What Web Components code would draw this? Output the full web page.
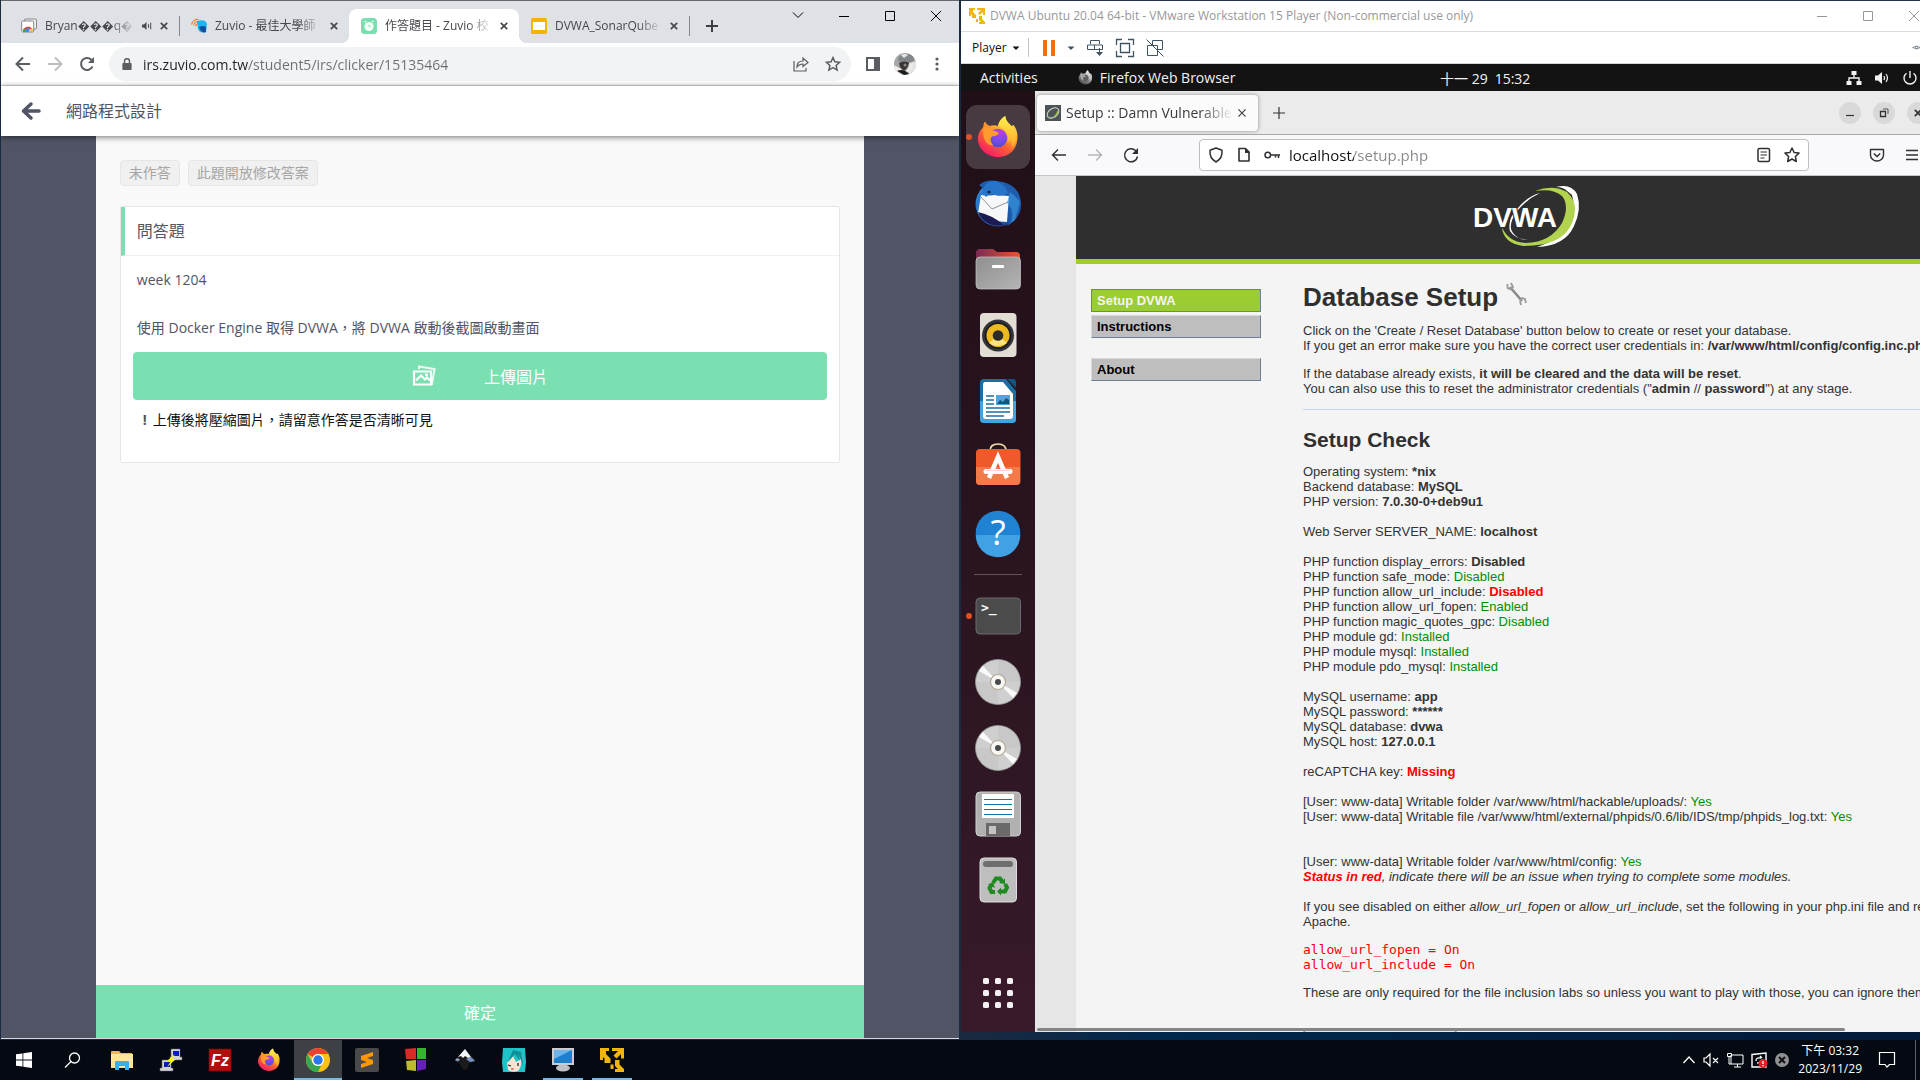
<!DOCTYPE html>
<html lang="zh-Hant">
<head>
<meta charset="utf-8">
<title>Desktop</title>
<style>
html,body{margin:0;height:100%;overflow:hidden;background:#06101c}
body{font-family:"Open Sans","Noto Sans CJK TC",sans-serif;font-size:12px}
</style>
</head>
<body>
<desk-top></desk-top>
<script>
const define=(name,css,html,after)=>{
  const tpl=document.createElement('template');
  tpl.innerHTML='<style>*{box-sizing:border-box}button{font:inherit;color:inherit;background:none;border:0;padding:0;margin:0;cursor:pointer}input{font:inherit;border:0;margin:0;padding:0;background:none;outline:0;min-width:0}'+css+'</style>'+html;
  customElements.define(name,class extends HTMLElement{
    constructor(){super();this.attachShadow({mode:'open'}).append(tpl.content.cloneNode(true));}
    connectedCallback(){if(after)after(this,this.shadowRoot);}
  });
};

const S='fill="none" stroke="currentColor"';
const firefox=`<defs><linearGradient id="a" x1=".85" y1="0" x2=".25" y2="1"><stop offset="0" stop-color="#fff44f"/><stop offset=".35" stop-color="#ffb02e"/><stop offset=".65" stop-color="#ff5a36"/><stop offset="1" stop-color="#f5156c"/></linearGradient><radialGradient id="b" cx=".6" cy=".2" r=".9"><stop offset="0" stop-color="#c139e6"/><stop offset=".5" stop-color="#7a4be8"/><stop offset="1" stop-color="#4a4bc4"/></radialGradient><linearGradient id="c" x1="0" y1="0" x2="0" y2="1"><stop offset="0" stop-color="#fff04c"/><stop offset="1" stop-color="#ffa52a"/></linearGradient></defs><path fill="url(#a)" d="M8 13c0-3 1-5 2-6 1 3 3 4 5 5 3-1 6-1 9 0 1-5 4-9 8-11 0 5 4 8 7 11l2-1c3 4 5 9 4 16-1 12-10 19-21 19S3 38 2 27c0-6 2-10 6-14Z"/><circle cx="24" cy="25" r="10" fill="url(#b)"/><path fill="#ff9a2c" d="M8 13c5-1 8 1 10 4 3 0 5 1 7 3-2 3-6 3-8 4-2 2-1 6 2 9-8 1-13-9-11-20Z"/><path fill="url(#c)" d="M32 1c0 5 4 8 8 13 5 7 5 15-1 22 1-4-1-6-1-9-2 2-3 4-4 4 3-8-1-16-10-19 1-5 4-9 8-11Z"/>`;
const vm=`<path fill="#f2b50c" d="M0 0h6v2H4v2l3 3-2 2-3-3v2H0ZM8 0h8v7h-2V4l-3 3-2-2 3-3H8ZM10 8h3v3l3 3v2h-6v-2h2l-2-2ZM3 7h4v3H3ZM7 11h2v3H7Z"/>`;
const disc=`<circle cx="24" cy="24" r="22.5" fill="#cfcfcf" stroke="#989898" stroke-width=".8"/><path fill="#bfbfbf" d="M24 24 24 2A22 22 0 0 1 46 24ZM24 24V46A22 22 0 0 1 2 24Z" opacity=".45"/><path fill="#fafafa" d="M24 24 5 13 9 8ZM24 24 43 35 39 40Z"/><circle cx="24" cy="24" r="7.5" fill="#f7f7f5" stroke="#b4a894" stroke-width="1.2"/><circle cx="24" cy="24" r="3" fill="#4a4a4a"/>`;
const ICONS={
 'cws':[16,`<rect x="3.500" y="1" width="12" height="10" rx="1" fill="#eee" stroke="#888"/><rect x=".7" y="3" width="12" height="11" rx="1" fill="#fff" stroke="#888"/><path fill="#ea4335" d="M2 13a5 5 0 0 1 9.500-1.500L7 11Z"/><path fill="#34a853" d="M2 14a5 5 0 0 1 1-4l3 4Z"/><path fill="#fbbc05" d="M11.500 10.500q.8 2 0 3.500H8Z"/><circle cx="6.700" cy="12" r="2" fill="#4285f4"/>`],
 'zuvio':[16,`<path d="M.5 6.500a6.500 6.500 0 0 1 7-5M2.800 7.500a4.500 4.500 0 0 1 4.700-4M5 8.500a2.500 2.500 0 0 1 2.500-3" fill="none" stroke="#f47b20" stroke-width="1.200"/><path fill="#1db4f0" d="M6 3q7-2 9 1l1 2-1 8q-6 2-8-3Z"/><path fill="#1450a0" d="M8 9q4-2 7 0v5q-5 2-7-5Z"/>`],
 'clicker':[16,`<rect width="16" height="16" rx="3.500" fill="#79dfb0"/><circle cx="8" cy="8.500" r="4.600" fill="#f7fffb"/><path d="M5 4 3.500 3M11 4l1.500-1" stroke="#f7fffb" stroke-width="1.200"/><path d="M8 6.500v2h1.500" stroke="#79dfb0" stroke-width=".9" fill="none"/>`],
 'slides':[16,`<rect width="16" height="16" rx="1.500" fill="#f4b400"/><rect x="2" y="4" width="12" height="8" fill="#fff"/>`],
 'sound':[10,`<path fill="currentColor" d="M0 3.500h2L4.500 1v8L2 6.500H0ZM6 3l1 .6v3L6 7ZM8.200 1.500l1 .5v6l-1 .5Z"/>`],
 'x':[8,`<path ${S} stroke-width="1.700" d="m.8.8 6.400 6.400M7.200.8.8 7.200"/>`],
 'xthin':[8,`<path ${S} stroke-width="1.100" d="m.4.4 7.200 7.200M7.600.4.4 7.600"/>`],
 'plus':[12,`<path ${S} stroke-width="2" d="M6 0v12M0 6h12"/>`],
 'plusthin':[12,`<path ${S} stroke-width="1.200" d="M6 0v12M0 6h12"/>`],
 'down':[10,`<path ${S} d="m0 2.500 5 5 5-5"/>`],
 'min':[10,`<path ${S} d="M0 5.500h10"/>`],
 'max':[10,`<path ${S} d="M.5.5h9v9h-9z"/>`],
 'close':[10,`<path ${S} d="m0 0 10 10M10 0 0 10"/>`],
 'back':[16,`<path ${S} stroke-width="2" d="M15 8H2M8 1.500 1.500 8 8 14.500"/>`],
 'fwd':[16,`<path ${S} stroke-width="2" d="M1 8h13M8 1.500 14.500 8 8 14.500"/>`],
 'reload':[16,`<path ${S} stroke-width="2" d="M13.500 10.500A6 6 0 1 1 12.300 3.700L14 5.400"/><path fill="currentColor" d="M15 1v6H9Z"/>`],
 'lock':[12,`<path fill="currentColor" d="M2 5h8q.6 0 .6.700v5.600q0 .7-.6.700H2q-.6 0-.6-.7V5.700Q1.400 5 2 5Z"/><path ${S} stroke-width="1.400" d="M3.500 5V3.200a2.500 2.500 0 0 1 5 0V5"/>`],
 'share':[16,`<path ${S} stroke-width="1.200" d="M1 5v10h12v-3M4 11q0-6 6-6V2l5 4.500-5 4V8Q6 8 4 11Z"/>`],
 'star':[16,`<path ${S} stroke-width="1.500" d="m8 1.500 1.900 4.300 4.700.5-3.500 3.200 1 4.600L8 11.700l-4.100 2.400 1-4.600L1.400 6.300l4.700-.5Z"/>`],
 'panel':[16,`<path fill="currentColor" d="M1 1h14v14H1ZM3 3v10h6V3Z" fill-rule="evenodd"/>`],
 'avatar':[22,`<defs><clipPath id="k"><circle cx="11" cy="11" r="11"/></clipPath></defs><g clip-path="url(#k)"><path fill="#a5a8a6" d="M0 0h22v22H0z"/><ellipse cx="12" cy="6" rx="8" ry="5" fill="#83868a"/><path fill="#e5e5e5" d="M7 2q4-2 7 0l-4 3ZM15 10l7-2v8l-7 6Z"/><path fill="#3a3434" d="M5 10q6-3 10 0l-2 5-3 3-4-4Z"/><path fill="#f2ecea" d="m0 12 7 4 3 5H3ZM12 18l5-7 1 2-4 7Z"/><path fill="#1d1a1a" d="M3 18q6-3 12 3l-5 1Z"/><circle cx="11" cy="12" r="1.500" fill="#888"/></g>`],
 'dots':[16,`<g fill="currentColor"><circle cx="8" cy="3" r="1.600"/><circle cx="8" cy="8" r="1.600"/><circle cx="8" cy="13" r="1.600"/></g>`],
 'bigback':[20,`<path ${S} stroke-width="3.500" stroke-linecap="round" stroke-linejoin="round" d="M18 10H3M10 3l-7.500 7 7.500 7"/>`],
 'photos':[24,`<path ${S} stroke-width="2" opacity=".85" d="M7 5V2.500L22.500 5 20 20h-1"/><path ${S} stroke-width="2.200" d="M2 7.500h17v13H2Z"/><path ${S} stroke-width="2" d="m4 16.500 5-5 4 4 2-2 3 3"/><circle cx="14.500" cy="10.800" r="1.500" fill="currentColor"/>`],
 'vm':[16,vm],
 'pause':[16,`<path fill="#ff6a13" d="M2 0h4v16H2ZM10 0h4v16h-4Z"/>`],
 'caret':[8,`<path fill="currentColor" d="M.5 2.500h7L4 6Z"/>`],
 'cad':[18,`<path ${S} d="M4.500 5V1.500h9V5M1.500 6h7v4.500h-7ZM8.500 6h8v4.500h-8ZM13.500 9v6"/><path fill="currentColor" d="M10 13h7l-3.500 4Z"/>`],
 'full':[18,`<path ${S} stroke-width="1.300" d="M.5 6V.5H6M12 .5h5.500V6M17.500 12v5.500H12M6 17.500H.5V12M4.500 4.500h9v9h-9Z"/>`],
 'unity':[18,`<path ${S} d="M6.500 6V1.500h10v9H12M1.500 6.500h10v10h-10ZM.500.500l17 17"/>`],
 'eye':[16,`<path ${S} d="M1 8q7-5 14 0-7 5-14 0Z"/><circle cx="8" cy="8" r="2" ${S}/>`],
 'firefox':[48,firefox],
 'net':[16,`<path fill="currentColor" d="M5.500 1h5v4h-5ZM.5 11h5v4h-5ZM10.500 11h5v4h-5Z"/><path ${S} stroke-width="1.400" d="M8 4v4M3 12V8h10v4"/>`],
 'vol':[16,`<path fill="currentColor" d="M1 5.500h3L8 2v12L4 10.500H1Z"/><path ${S} stroke-width="1.200" d="M9.800 6q1.600 2 0 4M12 4q3 4 0 8"/>`],
 'power':[16,`<path ${S} stroke-width="1.400" d="M4.500 3.200a6 6 0 1 0 7 0M8 1v7"/>`],
 'fback':[16,`<path ${S} stroke-width="1.400" d="M15 8H1.500M7 2.500 1.500 8 7 13.500"/>`],
 'ffwd':[16,`<path ${S} stroke-width="1.400" d="M1 8h13.500M9 2.500 14.500 8 9 13.500"/>`],
 'freload':[16,`<path ${S} stroke-width="1.500" d="M14.500 9.500A6.500 6.500 0 1 1 12.500 3.500L14 5"/><path fill="currentColor" d="M15 1v6H9Z"/>`],
 'shield':[16,`<path ${S} stroke-width="1.500" stroke-linejoin="round" d="m8 1 6 2.300c.5 5-1 9-6 11.700C3 12.300 1.500 8.300 2 3.300Z"/>`],
 'doc':[16,`<path ${S} stroke-width="1.600" stroke-linejoin="round" d="M3 1.500h6.500L13 5v9H3Z"/><path fill="currentColor" d="M9 1v5h5Z"/>`],
 'key':[16,`<circle cx="3.800" cy="8" r="2.800" ${S} stroke-width="1.500"/><path ${S} stroke-width="1.500" d="M6.500 8H16M14.500 8v3M11.500 8v2.500"/>`],
 'reader':[16,`<rect x="2" y="1.500" width="11.500" height="13" rx="1.500" ${S} stroke-width="1.500"/><path ${S} stroke-width="1.200" d="M4.500 5H11M4.500 8H11M4.500 11H8.500"/>`],
 'fstar':[16,`<path ${S} stroke-width="1.500" stroke-linejoin="round" d="m8 1 2.100 4.500 4.900.6-3.600 3.400.9 5L8 12l-4.300 2.500.9-5L1 6.100l4.900-.6Z"/>`],
 'pocket':[16,`<path ${S} stroke-width="1.400" stroke-linejoin="round" d="M1.500 2.500h13V8a6.500 6 0 0 1-13 0Z"/><path ${S} stroke-width="1.500" d="m4.800 6.500 3.200 3 3.200-3"/>`],
 'menu':[14,`<path ${S} stroke-width="1.300" d="M1 2.500h12M1 7h12M1 11.500h12"/>`],
 'wmin':[10,`<path ${S} stroke-width="1.200" d="M1 7.500h8"/>`],
 'wres':[10,`<path ${S} stroke-width="1.300" d="M1.500 3.500h5v5h-5Z"/><path ${S} stroke-width=".8" d="M4 1h5v5"/>`],
 'dvwafav':[16,`<path fill="#4d5358" d="M0 0h16v16H0z"/><ellipse cx="8" cy="8" rx="6.500" ry="4.300" transform="rotate(-35 8 8)" fill="none" stroke="#d7dccf" stroke-width="1"/><path d="M3 12q7 3 10-6" fill="none" stroke="#9bc83a" stroke-width="1.200"/>`],
 'thunderbird':[48,`<defs><linearGradient id="t" x1="0" y1="0" x2="1" y2="1"><stop offset="0" stop-color="#2f8fe0"/><stop offset="1" stop-color="#173f94"/></linearGradient></defs><circle cx="24" cy="25" r="22.500" fill="url(#t)"/><path fill="#1e5cae" d="M5 6Q14-1 26 3 47 6 47 26q0 13-14 21 5-9 2-17Z"/><path fill="#f6f7f8" d="M7 16q6 1 13 0l15 1-2 26q-14 0-29-9Z"/><path d="m7 18 11 12 16-7" fill="none" stroke="#888" stroke-width=".9"/><path fill="#2775ca" d="M10 8q3-7 12-6 9 3 12 12-7 4-13 2-5-3-9 2Q8 14 10 8Z"/><path fill="#3c9be0" d="M36 13q6 4 10 10l-5 18-4 3q4-13-4-20Z" opacity=".6"/><path fill="#1b1b52" d="M4 33q14 3 26 13Q11 49 4 33Z"/><circle cx="15" cy="13" r="1.600" fill="#10264f"/>`],
 'files':[48,`<defs><linearGradient id="f" x1="0" x2="1"><stop offset="0" stop-color="#7b2a55"/><stop offset="1" stop-color="#e9552a"/></linearGradient><linearGradient id="g" x1="0" y1="0" x2="1" y2="1"><stop offset="0" stop-color="#8f8f8f"/><stop offset="1" stop-color="#b4b4b4"/></linearGradient></defs><path fill="url(#f)" d="M2 8q0-4 4-4h13l4 3h19q4 0 4 4v9H2Z"/><rect x="2" y="12" width="44.500" height="32" rx="4" fill="url(#g)" stroke="#c8c8c8" stroke-width=".7"/><rect x="18" y="20" width="12" height="3" rx="1" fill="#fff"/>`],
 'rhythm':[48,`<rect x="6" y="2" width="36.500" height="44" rx="4" fill="#e3ded3"/><circle cx="24" cy="24.500" r="16" fill="#34343c"/><circle cx="24" cy="24.500" r="13.500" fill="#1d1d22"/><circle cx="24" cy="24.500" r="11.500" fill="#eeb91e"/><path fill="#ffe37d" d="M15 32q8 6 18 0l-9-8Z"/><circle cx="24" cy="24.500" r="5.300" fill="#2b2b2b"/>`],
 'writer':[48,`<path fill="#1a6fa3" d="M10 2h22l10 12v28q0 4-4 4H10q-4 0-4-4V6q0-4 4-4Z"/><path fill="#41a4dc" d="M6 24h36v18q0 4-4 4H10q-4 0-4-4Z"/><path fill="#0f5580" d="M33 2h6q3 0 3 3v6Z"/><path fill="#fff" d="M11 5h18l10 12v22q0 3-3 3H12q-3 0-3-3V8q0-3 2-3Z"/><path stroke="#1a6fa3" stroke-width="1.700" d="M12 19h8M12 23h8M12 27h8M12 31h24M12 35h24M12 39h18"/><path fill="#4aa8dc" d="M22 18h14v10H22Z"/><path fill="#14547f" d="m23 27 3-4 3 2 3-4 3 2v4Z"/>`],
 'software':[48,`<path d="M16 8q0-7 8-7t8 7" fill="none" stroke="#f3d9a8" stroke-width="1.700"/><rect x="2" y="6" width="44.500" height="36" rx="4" fill="#f0592a"/><path fill="#f37b4a" d="M2 24h44v14q0 4-4 4H6q-4 0-4-4Z"/><path d="M15 35 24 14l9 21" fill="none" stroke="#fff" stroke-width="4.500"/><path d="M12 28.500h24" stroke="#fff" stroke-width="5" stroke-linecap="round"/><path d="M12 27.500h24" stroke="#f8cdbb" stroke-width=".8"/>`],
 'help':[48,`<circle cx="24" cy="24" r="22.300" fill="#1f82d2"/><path fill="#40a1e4" d="M1.700 26h44.600A22.300 22.300 0 0 1 1.700 26Z"/><text x="24" y="36" text-anchor="middle" font-family="Open Sans" font-size="35" fill="#fff">?</text>`],
 'terminal':[48,`<rect x="2" y="6" width="44.500" height="36" rx="4" fill="#4b4b4b" stroke="#6b6b6b"/><text x="7" y="20" font-family="DejaVu Sans Mono" font-weight="bold" font-size="13" fill="#fff">&gt;_</text>`],
 'disc':[48,disc],
 'floppy':[48,`<rect x="2" y="2" width="44.500" height="44" rx="4" fill="#b1b1b1" stroke="#d0d0d0"/><path fill="#fff" d="M8 4h32v24H8z"/><path stroke="#0d79a8" d="M10 9.500h28M10 14.500h28M10 19.500h28M10 24.500h28"/><path fill="#6a6a6a" d="M12 33h24v13H12z"/><path fill="#c4c4c4" d="M15 36h7v8h-7z"/>`],
 'trash':[48,`<rect x="6" y="2" width="36.500" height="44" rx="4" fill="#bebebe" stroke="#dcdcdc"/><rect x="9" y="5" width="30" height="6" rx="3" fill="#6e6e6e"/><g fill="none" stroke="#1f8a1f" stroke-width="4"><path d="m19 27 3-4.500h4l2.500 3.500M31 28l2 3.500-2 4h-4.500M21 36h-3.500l-2-4 2-3.500"/></g><path fill="#1f8a1f" d="m25 27 6 1 0-5.500ZM27 31.500v8l-4-4ZM14 28.500l5-2.500 2 6Z"/>`],
 'grid':[48,`<g fill="#f2f0f1"><rect x="9" y="9" width="6" height="6" rx="1.500"/><rect x="21" y="9" width="6" height="6" rx="1.500"/><rect x="33" y="9" width="6" height="6" rx="1.500"/><rect x="9" y="21" width="6" height="6" rx="1.500"/><rect x="21" y="21" width="6" height="6" rx="1.500"/><rect x="33" y="21" width="6" height="6" rx="1.500"/><rect x="9" y="33" width="6" height="6" rx="1.500"/><rect x="21" y="33" width="6" height="6" rx="1.500"/><rect x="33" y="33" width="6" height="6" rx="1.500"/></g>`],
 'wrench':[24,`<path d="m6 5 12 14" stroke="#8b8b8b" stroke-width="2.600"/><path d="M3.500 2v4l3 1.500L9 5l-2-4M16 19l2-3 3 1 1 4M16 19l1 4" fill="none" stroke="#9a9a9a" stroke-width="1.800"/>`],
 'start':[16,`<path fill="#fff" d="M0 2.300 6.500 1.400V7.600H0ZM7.300 1.300 16 0V7.600H7.300ZM0 8.400H6.500v6.200L0 13.700ZM7.300 8.400H16V16L7.300 14.700Z"/>`],
 'search':[16,`<circle cx="9.500" cy="6" r="5" fill="none" stroke="#fff" stroke-width="1.300"/><path stroke="#fff" stroke-width="1.300" d="m6 9.500-6 6"/>`],
 'explorer':[24,`<path fill="#e9b94a" d="M1 4q0-1 1-1h7l2 2h11v4H1Z"/><path fill="#ffe59a" d="M1 6h22v14H1Z"/><path fill="#3ab0e8" d="M5 14q0-1 1-1h12q1 0 1 1v8h-4v-4H9v4H5Z"/>`],
 'putty':[24,`<path fill="#d4d4d4" stroke="#666" stroke-width=".5" d="M12 1h9v8h2v3H11V9h1ZM3 12h9v8h2v3H1v-3h2Z"/><path fill="#0b18c8" d="M14 3h6v5h-6ZM5 14h6v5H5Z"/><path fill="#ff0" d="m16 6-8 7h4l-4 6 9-8h-4Z"/>`],
 'filezilla':[24,`<path fill="#b30d0d" d="M1 1h22v22H1z"/><path d="M1 1h22v22H1z" fill="none" stroke="#7e0505" stroke-dasharray="2 1"/><text x="12" y="18" text-anchor="middle" font-family="Liberation Sans" font-weight="bold" font-style="italic" font-size="16" fill="#fff">Fz</text>`],
 'chrome':[24,`<circle cx="12" cy="12" r="12" fill="#fbc116"/><path fill="#e94335" d="M1.600 6A12 12 0 0 1 22.400 6H12a6 6 0 0 0-5.200 3Z"/><path fill="#34a853" d="M1.600 6 6.800 15A6 6 0 0 0 12 18l1 0-3 5.800A12 12 0 0 1 1.600 6Z"/><path fill="#34a853" d="m12 24 3-6-3 0-2 1 0 4.800Z"/><circle cx="12" cy="12" r="6" fill="#fff"/><circle cx="12" cy="12" r="4.700" fill="#2a78ee"/>`],
 'sublime':[24,`<rect width="24" height="24" rx="2" fill="#4a4a4a"/><path fill="#ff9800" d="m6 8 12-4v4L12 10l6 2v4L6 20v-4l6-2-6-2Z"/>`],
 'blocks':[24,`<path fill="#d72b25" d="m1 1 11-1v11H2Z"/><path fill="#35b52b" d="M13 0h9v11h-9Z"/><path fill="#bdbb2a" d="m2 13 10-1v11l-9-1Z"/><path fill="#6420b8" d="M13 12h9v9l-9 2Z"/>`],
 'inkscape':[24,`<path fill="#1b1b1b" d="M12 2 2 12q0 2 4 3l2 3q1 3 4 4l3-2 1-4 6-3V11Z"/><path fill="#f4f6fa" d="m12 1-7 8 3-1 2 2 2-2 3 2 3-1Z"/><path fill="#7b93c9" d="m18 9 4 4-5 1-4-3Z"/><path fill="#93a3c8" d="m4 10-2 2 3 1.500 2-2Z"/>`],
 'miku':[24,`<path fill="#1ec3c7" d="M1 0h22l1 14-1 10H1L0 14Z"/><path fill="#fbe3d4" d="m5 15 6-7 3 6 5-3q1 8-3 12-6 2-10-1Z"/><path fill="#0f8f97" d="M11 2 6 14l7-8 5 7-2-8 5 12-2-13Z"/><path stroke="#223" stroke-width="1.300" d="m6 17 3 1M16 15v3"/><path stroke="#c33" d="M9 21h3"/>`],
 'computer':[24,`<ellipse cx="12" cy="20" rx="7" ry="3.500" fill="#bfc1c4"/><path fill="#c9ccd0" d="M1 0h22v17H1Z"/><path fill="#1f7fcb" d="M3 2h18v13H3Z"/><path fill="#6bb5ea" d="M3 2h18L3 11Z"/>`],
 'chev':[12,`<path d="m.500 9 5.500-6 5.500 6" fill="none" stroke="#fff" stroke-width="1.300"/>`],
 'mute':[16,`<path d="M1 6h2l4-4v12L3 10H1ZM10 6l5 5M15 6l-5 5" fill="none" stroke="#fff" stroke-width="1.200"/>`],
 'monitor':[16,`<path d="M4 3h12v9H4ZM7 15h7M10.500 12v3M.500 1.500h4v3h-4ZM2 5v7h2" fill="none" stroke="#fff"/>`],
 'update':[16,`<path d="M1 2.500 15 1v14H1Z" fill="none" stroke="#fff" stroke-width="1.400"/><path d="M5 9q0-4 5-3M11 7q0 4-5 4M9 4l2 2" fill="none" stroke="#fff" stroke-width="1.300"/><circle cx="12" cy="11.500" r="4.500" fill="#e0202a"/><path d="M12 9v3M12 13v1.200" stroke="#fff" stroke-width="1.300"/>`],
 'offline':[14,`<circle cx="7" cy="7" r="7" fill="#8f9194"/><path d="m4 4 6 6M10 4l-6 6" stroke="#111" stroke-width="2"/>`],
 'note':[16,`<path d="M.500.500h15v12h-5L8 15l-2-2.500H.500Z" fill="none" stroke="#fff" stroke-width="1.200"/>`]
};
customElements.define('ui-icon',class extends HTMLElement{
  connectedCallback(){
    if(this.shadowRoot)return;
    const r=this.attachShadow({mode:'open'}),[v,p]=ICONS[this.getAttribute('name')],s=this.getAttribute('size')||v;
    r.innerHTML=`<style>:host{display:inline-flex;flex:none;width:${s}px;height:${s}px}svg{display:block;width:100%;height:100%;overflow:visible}</style><svg viewBox="0 0 ${v} ${v}" aria-hidden="true">${p}</svg>`;
  }
});

/* Chrome */
define('browser-tab',`
:host{display:flex;width:170px;height:34px;align-items:center;padding:0 11px 0 12px;gap:8px;color:#45484d;border-radius:8px 8px 0 0;position:relative}
:host([active]){background:#fff}
:host([active])::before,:host([active])::after{content:"";position:absolute;bottom:0;width:8px;height:8px;background:radial-gradient(circle at 0 0,transparent 8px,#fff 8px);left:-8px}
:host([active])::after{left:auto;right:-8px;background:radial-gradient(circle at 100% 0,transparent 8px,#fff 8px)}
:host([divided])::after{content:"";position:absolute;right:-1px;top:7px;width:1px;height:20px;background:#84878c}
.t{flex:1;min-width:0;overflow:hidden;white-space:nowrap;line-height:18px;-webkit-mask-image:linear-gradient(90deg,#000 calc(100% - 24px),transparent)}
button{display:flex;width:8px}`,`<slot name="icon"></slot><span class="t"><slot></slot></span><slot name="extra"></slot><button aria-label="關閉分頁"><ui-icon name="x"></ui-icon></button>`);
define('window-controls',`:host{display:flex;height:30px}button{width:46px;display:flex;align-items:center;justify-content:center}`,
`<slot></slot><button aria-label="最小化"><ui-icon name="min"></ui-icon></button><button aria-label="最大化"><ui-icon name="max"></ui-icon></button><button aria-label="關閉"><ui-icon name="close"></ui-icon></button>`);
define('chrome-window',`
:host{display:flex;flex-direction:column;background:#fff;border-top:1px solid #66686b;border-bottom:1px solid #d8d8d8;min-width:0;overflow:hidden}
.strip{display:flex;background:#dee1e6;height:42px;padding-left:8px;justify-content:space-between}
.tabs{display:flex;align-items:flex-end}
.new{display:flex;height:34px;width:45px;align-items:center;justify-content:center;color:#3c4043}
.search{width:46px;height:28px;display:flex;align-items:center;justify-content:center}
.bar{display:flex;height:43px;align-items:center;border-bottom:1px solid #d9dadc;padding:0 14px;gap:16px;color:#5a5d61}
.bar button{display:flex}
.dim{color:#bcbec1}
.end{display:flex;align-items:center;gap:13px}
.omni{flex:1;height:34px;border-radius:17px;background:#f1f3f4;display:flex;align-items:center;padding:0 10px 0 12px;gap:10px;margin:0 -2px}
input{flex:1;font-size:14px;height:30px;background:linear-gradient(90deg,#202124 105px,#6b6f74 105px);-webkit-background-clip:text;background-clip:text;-webkit-text-fill-color:transparent}
.omni .s{margin-left:6px}
zuvio-page{flex:1}`,`
<div class="strip"><div class="tabs">
<browser-tab divided><ui-icon slot="icon" name="cws"></ui-icon>Bryan���q�<ui-icon slot="extra" name="sound"></ui-icon></browser-tab>
<browser-tab><ui-icon slot="icon" name="zuvio"></ui-icon>Zuvio - 最佳大學師</browser-tab>
<browser-tab active><ui-icon slot="icon" name="clicker"></ui-icon>作答題目 - Zuvio 校</browser-tab>
<browser-tab divided><ui-icon slot="icon" name="slides"></ui-icon>DVWA_SonarQube</browser-tab>
<button class="new" aria-label="新分頁"><ui-icon name="plus"></ui-icon></button></div>
<window-controls><button class="search" aria-label="搜尋分頁"><ui-icon name="down"></ui-icon></button></window-controls></div>
<div class="bar"><button aria-label="上一頁"><ui-icon name="back"></ui-icon></button><button class="dim" aria-label="下一頁"><ui-icon name="fwd"></ui-icon></button><button aria-label="重新載入"><ui-icon name="reload"></ui-icon></button>
<div class="omni"><ui-icon name="lock"></ui-icon><input aria-label="網址" value="irs.zuvio.com.tw/student5/irs/clicker/15135464"><button aria-label="分享"><ui-icon name="share"></ui-icon></button><button class="s" aria-label="書籤"><ui-icon name="star"></ui-icon></button></div>
<div class="end"><button aria-label="側邊面板"><ui-icon name="panel"></ui-icon></button><button aria-label="個人資料"><ui-icon name="avatar"></ui-icon></button><button aria-label="選單"><ui-icon name="dots"></ui-icon></button></div></div>
<zuvio-page></zuvio-page>`);
define('zuvio-page',`
:host{display:flex;flex-direction:column;background:#505464;color:#505464;min-height:0}
header{height:50px;background:#fff;display:flex;align-items:center;gap:25px;padding:0 20px;font-size:16px;line-height:24px;box-shadow:0 1px 6px rgba(0,0,0,.55);position:relative}
header button{display:flex}
h1{font:inherit;margin:0}
main{flex:1;width:80.2%;margin:0 auto;background:#f9f9f9;display:flex;flex-direction:column}
.body{flex:1;padding:24px 24px}
.tags{display:flex;gap:8px;margin-bottom:20px}
.tags span{height:26px;border:1px solid #e6e6e6;background:#f0f0f0;border-radius:4px;padding:0 8px;font-size:14px;line-height:24px;color:#a6a6a6}
.ok{height:53px;background:#7be0b1;color:#fff;font-size:16px}`,`
<header><button aria-label="返回"><ui-icon name="bigback"></ui-icon></button><h1>網路程式設計</h1></header>
<main><div class="body"><div class="tags"><span>未作答</span><span>此題開放修改答案</span></div>
<question-card><span slot="title">問答題</span><p>week 1204</p><p>使用 Docker Engine 取得 DVWA，將 DVWA 啟動後截圖啟動畫面</p></question-card></div>
<button class="ok">確定</button></main>`);
define('question-card',`
:host{display:block;background:#fff;border:1px solid #e6e6e6;border-radius:2px;font-size:14px;padding-bottom:22px}
h2{margin:0;font-weight:400;font-size:16px;line-height:48px;border-bottom:1px solid #f0f0f0;border-left:4px solid #7be0b1;padding-left:12px}
::slotted(p){margin:0;padding:0 16px;line-height:48px}
.up{display:flex;align-items:center;justify-content:center;gap:48px;height:48px;width:calc(100% - 24px);margin:0 12px;border-radius:4px;background:#7be0b1;color:#fff;font-size:16px}
.note{display:flex;gap:6px;padding:0 22px;line-height:40px;color:#111}
b{color:#505464}`,`
<h2><slot name="title"></slot></h2><slot></slot>
<button class="up"><ui-icon name="photos"></ui-icon><span>上傳圖片</span></button>
<div class="note"><b>!</b><span>上傳後將壓縮圖片，請留意作答是否清晰可見</span></div>`);

/* VMware player and the Ubuntu guest */
define('player-window',`
:host{display:flex;flex-direction:column;background:#fff;border-top:1px solid #27354a;overflow:hidden;min-width:0}
.title{display:flex;align-items:center;height:31px;border-bottom:1px solid #dcdcdc;color:#989898;padding-left:8px;gap:5px}
.title span{flex:1;line-height:18px;white-space:nowrap}
.tools{display:flex;align-items:center;height:32px;border-bottom:1px solid #d5d5d5;padding:0 16px 0 11px;color:#3f5463;gap:12px}
.tools button{display:flex;align-items:center;gap:5px}
.tools .pl{color:#111;line-height:18px}
.tools .pm{margin:0 -1px 0 -2px}
i{width:1px;height:19px;background:#c4c4c4;margin-left:-4px}
.tools .eye{margin-left:auto}
.guest{flex:1;display:flex;min-height:0;background:linear-gradient(#210f18,#2a1520 55%,#391a2b)}
firefox-window{flex:1}`,`
<div class="title"><ui-icon name="vm"></ui-icon><span>DVWA Ubuntu 20.04 64-bit - VMware Workstation 15 Player (Non-commercial use only)</span><window-controls></window-controls></div>
<div class="tools"><button class="pl">Player <ui-icon name="caret"></ui-icon></button><i></i><button aria-label="Suspend"><ui-icon name="pause"></ui-icon></button><button class="pm" aria-label="Power menu"><ui-icon name="caret"></ui-icon></button><button aria-label="Send Ctrl+Alt+Del"><ui-icon name="cad"></ui-icon></button><button aria-label="Full screen"><ui-icon name="full"></ui-icon></button><button aria-label="Unity"><ui-icon name="unity"></ui-icon></button><button class="eye" aria-label="Devices"><ui-icon name="eye" size="9"></ui-icon></button></div>
<gnome-bar></gnome-bar><div class="guest"><gnome-dock></gnome-dock><firefox-window></firefox-window></div>`);
define('gnome-bar',`
:host{display:flex;height:27px;background:#131313;color:#f2f2f2;font-size:14px;align-items:center;line-height:20px}
button{display:flex;align-items:center;gap:7px;white-space:nowrap}
.l{width:479px;display:flex;gap:40px;padding-left:19px}
.c{padding-top:2px}
.r{gap:12px;margin-left:auto;padding-right:19px}
.l ui-icon{filter:grayscale(1)}`,`
<div class="l"><button>Activities</button><button><ui-icon name="firefox" size="15"></ui-icon>Firefox Web Browser</button></div>
<button class="c">十一 29&ensp;15:32</button>
<button class="r" aria-label="System"><ui-icon name="net"></ui-icon><ui-icon name="vol"></ui-icon><ui-icon name="power"></ui-icon></button>`);
define('dock-item',`
:host{display:flex;width:74px;height:66px;align-items:center;justify-content:center;position:relative}
button{width:64px;height:64px;border-radius:11px;display:flex;align-items:center;justify-content:center}
:host([active]) button{background:#483a43}
:host([running])::before{content:"";position:absolute;left:5px;top:30px;width:6px;height:6px;border-radius:50%;background:#e2511f}`,`<button><slot></slot></button>`);
define('gnome-dock',`
:host{display:flex;flex-direction:column;width:74px;padding:13px 0 6px}
hr{width:48px;height:1px;border:0;background:#5f525a;margin:8px auto}
.apps{margin-top:auto}`,`
<dock-item active running><ui-icon name="firefox" size="44"></ui-icon></dock-item><dock-item><ui-icon name="thunderbird"></ui-icon></dock-item><dock-item><ui-icon name="files"></ui-icon></dock-item><dock-item><ui-icon name="rhythm"></ui-icon></dock-item><dock-item><ui-icon name="writer"></ui-icon></dock-item><dock-item><ui-icon name="software"></ui-icon></dock-item><dock-item><ui-icon name="help"></ui-icon></dock-item><hr>
<dock-item running><ui-icon name="terminal"></ui-icon></dock-item><dock-item><ui-icon name="disc"></ui-icon></dock-item><dock-item><ui-icon name="disc"></ui-icon></dock-item><dock-item><ui-icon name="floppy"></ui-icon></dock-item><dock-item><ui-icon name="trash"></ui-icon></dock-item>
<dock-item class="apps"><ui-icon name="grid"></ui-icon></dock-item>`);
define('firefox-window',`
:host{display:flex;flex-direction:column;background:#e6e6e6;min-width:0;overflow:hidden;font-size:14px;position:relative}
button{display:flex}
.strip{height:44px;background:#ebebeb;border-bottom:1px solid #a9a9ab;display:flex;align-items:center;padding-left:2px}
.tab{display:flex;align-items:center;width:221px;height:36px;background:#fbfbfb;border-radius:4px;box-shadow:0 0 4px rgba(0,0,0,.4);padding:0 12px 0 8px;gap:5px;color:#3a3a40}
.tab span{flex:1;overflow:hidden;white-space:nowrap;line-height:20px;-webkit-mask-image:linear-gradient(90deg,#000 calc(100% - 34px),transparent)}
.new{margin-left:15px;color:#333}
.ctl{display:flex;gap:12px;margin-left:auto;padding-right:8px}
.ctl button{width:22px;height:22px;border-radius:50%;background:#d9d9d9;align-items:center;justify-content:center;color:#333}
.bar{height:41px;background:#f9f9fb;border-bottom:1px solid #c6c6c8;display:flex;align-items:center;padding:0 18px 0 16px;gap:20px;color:#2f2f33}
.dim{color:#b5b5b8}
.url{flex:1;height:32px;border:1px solid #bfbfc3;border-radius:4px;background:#fff;display:flex;align-items:center;padding:0 8px;gap:12px;margin:0 40px}
input{flex:1;font-size:15px;height:28px;margin-left:-3px;background:linear-gradient(90deg,#111 65px,#85858a 65px);-webkit-background-clip:text;background-clip:text;-webkit-text-fill-color:transparent}
dvwa-page{flex:1}
.scroll{position:absolute;left:2px;bottom:1px;height:3px;width:808px;background:#848484;border-radius:2px}`,`
<div class="strip"><div class="tab"><ui-icon name="dvwafav"></ui-icon><span>Setup :: Damn Vulnerable</span><button aria-label="Close tab"><ui-icon name="xthin"></ui-icon></button></div><button class="new" aria-label="New tab"><ui-icon name="plusthin"></ui-icon></button>
<div class="ctl"><button aria-label="Minimize"><ui-icon name="wmin"></ui-icon></button><button aria-label="Restore"><ui-icon name="wres"></ui-icon></button><button aria-label="Close"><ui-icon name="x"></ui-icon></button></div></div>
<div class="bar"><button aria-label="Back"><ui-icon name="fback"></ui-icon></button><button class="dim" aria-label="Forward"><ui-icon name="ffwd"></ui-icon></button><button aria-label="Reload"><ui-icon name="freload"></ui-icon></button>
<div class="url"><ui-icon name="shield"></ui-icon><ui-icon name="doc"></ui-icon><ui-icon name="key"></ui-icon><input aria-label="Address" value="localhost/setup.php"><button aria-label="Reader view"><ui-icon name="reader"></ui-icon></button><button aria-label="Bookmark"><ui-icon name="fstar"></ui-icon></button></div>
<button aria-label="Pocket"><ui-icon name="pocket"></ui-icon></button><button aria-label="Menu"><ui-icon name="menu"></ui-icon></button></div>
<dvwa-page></dvwa-page><div class="scroll"></div>`);
define('dvwa-logo',`:host{display:block;width:106px;height:62px}svg{display:block;overflow:visible}`,`
<svg width="106" height="62" viewBox="0 0 106 62"><path fill="#fff" d="M83 1Q98-3 104 8q5 15-3 32Q92 60 64 61 86 54 95 34q7-19 0-28-4-5-12-5Z"/><path fill="#2f2f2f" d="M80 3q13-1 19 6 4 12-3 28Q87 56 62 60l-8-4L88 30Z"/><path fill="#b1d34e" d="M62 5Q80-2 94 6q13 12 5 31Q90 60 50 60 30 57 29 41q6 15 24 16 25-1 36-20 8-17 0-27-9-8-27-5Z"/><path fill="#fff" d="M67 7Q54 13 44 25q-10 15-4 22 6 8 19 7-17 0-22-9-3-12 8-23Q55 10 67 7Z"/>
<text x="0" y="41" font-family="Liberation Sans" font-weight="bold" font-size="28" fill="#fff" stroke="#2f2f2f" stroke-width="2" paint-order="stroke">DVWA</text></svg>`);
define('dvwa-page',`
:host{display:block;min-height:0;overflow:hidden;padding-left:41px;font:13px/15px "Liberation Sans",sans-serif;color:#333;margin-right:-39px}
.page{background:#f4f4f4;min-height:100%}
header{background:#2f2f2f;height:88px;border-bottom:5px solid #a2cc28;display:flex;justify-content:center;padding-top:10px}
.cols{display:flex}
nav{width:227px;padding:25px 0 0 15px;display:flex;flex-direction:column;gap:3px}
nav a{display:block;width:170px;height:23px;border:1px solid #6b7f99;border-top-color:#d8d8d8;border-left-color:#d8d8d8;background:#bebebe;color:#000;font-weight:bold;line-height:21px;padding-left:5px;text-decoration:none}
nav a.on{background:#9acd32;color:#f4f4f4;border-color:#6b7f99}
nav a.gap{margin-top:17px}
main{flex:1;padding-top:18px;white-space:nowrap}
h1{font-size:26px;line-height:30px;margin:0 0 11px;display:flex;gap:6px;color:#2f2f2f}
p,pre{margin:0 0 13px}
hr{border:0;height:1px;background:#c0d8f5;margin:0 0 17px}
h2{font-size:21px;line-height:25px;margin:0 0 12px;color:#2f2f2f}
pre{font:13px/15px "DejaVu Sans Mono",monospace;color:red}
.g{color:#008f00}.r{color:red;font-weight:bold}
.sub{margin-top:17px;width:154px;height:24px;border:1px solid #777;border-radius:3px;background:#e9e9ed;color:#111;font-size:13px}`,`
<div class="page"><header><dvwa-logo></dvwa-logo></header><div class="cols">
<nav><a class="on" href="#">Setup DVWA</a><a href="#">Instructions</a><a class="gap" href="#">About</a></nav>
<main><h1>Database Setup <ui-icon name="wrench"></ui-icon></h1>
<p>Click on the 'Create / Reset Database' button below to create or reset your database.<br>If you get an error make sure you have the correct user credentials in: <b>/var/www/html/config/config.inc.php</b></p>
<p>If the database already exists, <b>it will be cleared and the data will be reset</b>.<br>You can also use this to reset the administrator credentials ("<b>admin</b> // <b>password</b>") at any stage.</p><hr>
<h2>Setup Check</h2>
<p>Operating system: <b>*nix</b><br>Backend database: <b>MySQL</b><br>PHP version: <b>7.0.30-0+deb9u1</b><br><br>Web Server SERVER_NAME: <b>localhost</b><br><br>PHP function display_errors: <b>Disabled</b><br>PHP function safe_mode: <span class="g">Disabled</span><br>PHP function allow_url_include: <span class="r">Disabled</span><br>PHP function allow_url_fopen: <span class="g">Enabled</span><br>PHP function magic_quotes_gpc: <span class="g">Disabled</span><br>PHP module gd: <span class="g">Installed</span><br>PHP module mysql: <span class="g">Installed</span><br>PHP module pdo_mysql: <span class="g">Installed</span><br><br>MySQL username: <b>app</b><br>MySQL password: <b>******</b><br>MySQL database: <b>dvwa</b><br>MySQL host: <b>127.0.0.1</b><br><br>reCAPTCHA key: <span class="r">Missing</span><br><br>[User: www-data] Writable folder /var/www/html/hackable/uploads/: <span class="g">Yes</span><br>[User: www-data] Writable file /var/www/html/external/phpids/0.6/lib/IDS/tmp/phpids_log.txt: <span class="g">Yes</span><br><br><br>[User: www-data] Writable folder /var/www/html/config: <span class="g">Yes</span><br><i><span class="r">Status in red</span>, indicate there will be an issue when trying to complete some modules.</i><br><br>If you see disabled on either <i>allow_url_fopen</i> or <i>allow_url_include</i>, set the following in your php.ini file and restart<br>Apache.</p>
<pre>allow_url_fopen = On
allow_url_include = On</pre>
<p>These are only required for the file inclusion labs so unless you want to play with those, you can ignore them.</p>
<button class="sub" aria-label="Create / Reset Database"></button></main></div></div>`);

/* Windows taskbar */
define('task-item',`
:host{display:block;width:48px;height:40px}
button{width:100%;height:100%;display:flex;align-items:center;justify-content:center}
:host([active]){background:#3d4045;box-shadow:inset 0 -2px #76b9ed}
:host([open]){background:linear-gradient(#76b9ed,#76b9ed) 50% 100%/40px 2px no-repeat}`,`<button><slot></slot></button>`);
define('task-bar',`
:host{display:flex;height:40px;background:#050a12;color:#fff;justify-content:space-between}
.l,.r{display:flex}
.l{gap:1px}
.r{align-items:center;gap:8px}
.r>button{display:flex}
.r>.clock{display:block;line-height:18px;text-align:center;margin-left:1px}
.n{margin-left:9px}
.desk{width:5px;height:40px;border-left:1px solid #5c6067;margin-left:12px}`,`
<div class="l"><task-item><ui-icon name="start"></ui-icon></task-item><task-item><ui-icon name="search"></ui-icon></task-item><task-item><ui-icon name="explorer"></ui-icon></task-item><task-item><ui-icon name="putty"></ui-icon></task-item><task-item><ui-icon name="filezilla"></ui-icon></task-item><task-item><ui-icon name="firefox" size="24"></ui-icon></task-item><task-item active><ui-icon name="chrome"></ui-icon></task-item><task-item><ui-icon name="sublime"></ui-icon></task-item><task-item><ui-icon name="blocks"></ui-icon></task-item><task-item><ui-icon name="inkscape"></ui-icon></task-item><task-item><ui-icon name="miku"></ui-icon></task-item><task-item open><ui-icon name="computer"></ui-icon></task-item><task-item open><ui-icon name="vm" size="24"></ui-icon></task-item></div>
<div class="r"><button aria-label="顯示隱藏的圖示"><ui-icon name="chev"></ui-icon></button><button aria-label="音量"><ui-icon name="mute"></ui-icon></button><button aria-label="網路"><ui-icon name="monitor"></ui-icon></button><button aria-label="更新"><ui-icon name="update"></ui-icon></button><button aria-label="離線"><ui-icon name="offline"></ui-icon></button><button class="clock">下午 03:32<br>2023/11/29</button><button class="n" aria-label="通知"><ui-icon name="note"></ui-icon></button><button class="desk" aria-label="顯示桌面"></button></div>`);
define('desk-top',`
:host{display:flex;flex-direction:column;height:100vh;overflow:hidden;background:#02203f}
.wins{flex:1;display:grid;grid-template:minmax(0,1fr)/minmax(0,1fr) minmax(0,1fr);min-height:0;background:linear-gradient(90deg,#1b2a40 50%,#02284d 60%,#021b38)}
chrome-window{margin:0 1px 1px 1px}
player-window{margin:0 -17px 8px 1px}`,`<div class="wins"><chrome-window></chrome-window><player-window></player-window></div><task-bar></task-bar>`);
</script>
</body>
</html>
